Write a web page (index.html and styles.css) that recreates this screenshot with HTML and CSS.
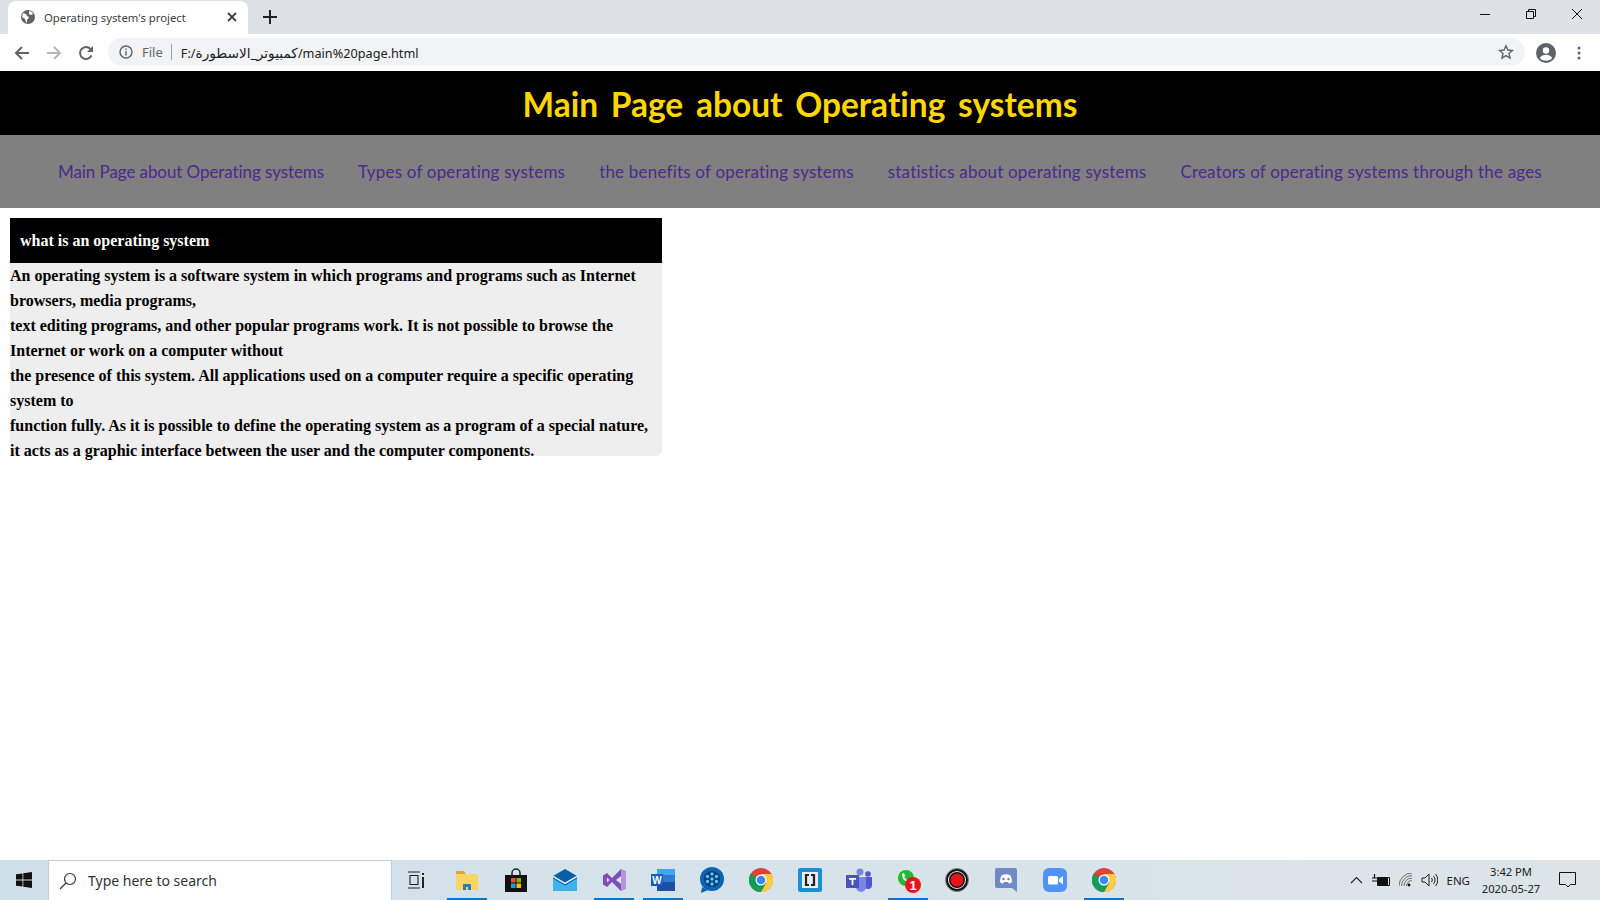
FILE: index.html
```html
<!DOCTYPE html>
<html lang="en">
<head>
    <meta charset="UTF-8">
    <title>Operating system's project</title>
    <link rel="stylesheet" href="styles.css">
</head>
<body>
    <div class="browser">
        <div class="tabstrip">
            <div class="tab">
                <svg class="favicon" width="16" height="16" viewBox="0 0 16 16"><circle cx="8" cy="8" r="7" fill="#5f6368"/><path d="M3 4l3 1 1 2 2 1-1 2-1 1v3l-1-1-1-3-3-2zM9 2l3 1 1 2-2 1-2-1z" fill="#fff"/></svg>
                <span class="tab-title">Operating system's project</span>
                <svg class="tab-close" width="10" height="10" viewBox="0 0 10 10"><path d="M1 1l8 8M9 1l-8 8" stroke="#3c4043" stroke-width="1.8"/></svg>
            </div>
            <svg class="new-tab" width="14" height="14" viewBox="0 0 14 14"><path d="M7 0v14M0 7h14" stroke="#202124" stroke-width="2"/></svg>
            <div class="window-controls">
                <svg width="12" height="12" viewBox="0 0 12 12"><path d="M1 6.500h10" stroke="#111" stroke-width="1"/></svg>
                <svg width="12" height="12" viewBox="0 0 12 12"><path d="M1.500 3.500h7v7h-7zM3.500 3.500v-2h7v7h-2" fill="none" stroke="#111" stroke-width="1"/></svg>
                <svg width="12" height="12" viewBox="0 0 12 12"><path d="M1 1l10 10M11 1l-10 10" stroke="#111" stroke-width="1"/></svg>
            </div>
        </div>
        <div class="toolbar">
            <svg class="nav-icon" width="16" height="16" viewBox="0 0 16 16"><path d="M15 8H2M8 2L2 8l6 6" fill="none" stroke="#5f6368" stroke-width="2"/></svg>
            <svg class="nav-icon" width="16" height="16" viewBox="0 0 16 16"><path d="M1 8h13M8 2l6 6-6 6" fill="none" stroke="#b4b6b9" stroke-width="2"/></svg>
            <svg class="nav-icon" width="16" height="16" viewBox="0 0 16 16"><path d="M13.500 10.500A6 6 0 1 1 12.500 4" fill="none" stroke="#5f6368" stroke-width="2"/><path d="M15 1v6H9z" fill="#5f6368"/></svg>
            <div class="omnibox">
                <svg width="14" height="14" viewBox="0 0 14 14"><circle cx="7" cy="7" r="6" fill="none" stroke="#5f6368" stroke-width="1.400"/><path d="M7 6v4.400M7 3.400v1.500" stroke="#5f6368" stroke-width="1.400"/></svg>
                <span class="scheme">File</span>
                <span class="url">F:/<span class="url-ar">كمبيوتر_الاسطورة</span>/main%20page.html</span>
                <svg class="star" width="16" height="16" viewBox="0 0 16 16"><path d="M8 1.800l1.900 4.200 4.500.5-3.400 3 1 4.500L8 11.600 4 14l1-4.500-3.400-3 4.500-.5z" fill="none" stroke="#5f6368" stroke-width="1.400"/></svg>
            </div>
            <svg class="avatar" width="20" height="20" viewBox="0 0 20 20"><circle cx="10" cy="10" r="10" fill="#5f6368"/><circle cx="10" cy="7.500" r="3.200" fill="#fff"/><path d="M3.800 15c1.500-2.400 3.700-3.200 6.200-3.200s4.700.8 6.200 3.200c-1.500 1.700-3.700 2.700-6.200 2.700s-4.700-1-6.200-2.700z" fill="#fff"/></svg>
            <svg class="menu-dots" width="4" height="14" viewBox="0 0 4 14"><circle cx="2" cy="2" r="1.500" fill="#5f6368"/><circle cx="2" cy="7" r="1.500" fill="#5f6368"/><circle cx="2" cy="12" r="1.500" fill="#5f6368"/></svg>
        </div>
    </div>

    <div class="page">
        <header class="site-header">
            <h1>Main Page about Operating systems</h1>
        </header>
        <nav class="site-nav">
            <a href="#">Main Page about Operating systems</a>
            <a href="#">Types of operating systems</a>
            <a href="#">the benefits of operating systems</a>
            <a href="#">statistics about operating systems</a>
            <a href="#">Creators of operating systems through the ages</a>
        </nav>
        <section class="card">
            <h2>what is an operating system</h2>
            <p>An operating system is a software system in which programs and programs such as Internet browsers, media programs,<br>
            text editing programs, and other popular programs work. It is not possible to browse the Internet or work on a computer without<br>
            the presence of this system. All applications used on a computer require a specific operating system to<br>
            function fully. As it is possible to define the operating system as a program of a special nature, it acts as a graphic interface between the user and the computer components.</p>
        </section>
    </div>

    <div class="taskbar">
        <div class="start">
            <svg width="16" height="16" viewBox="0 0 16 16"><path d="M0 2.300l6.500-.9v6.200H0zM7.300 1.300L16 0v7.600H7.300zM0 8.400h6.500v6.200L0 13.700zM7.300 8.400H16V16l-8.700-1.300z" fill="#111"/></svg>
        </div>
        <div class="search">
            <svg width="18" height="18" viewBox="0 0 18 18"><circle cx="11" cy="7" r="5.500" fill="none" stroke="#333" stroke-width="1.200"/><path d="M7 11l-6 6" stroke="#333" stroke-width="1.200"/></svg>
            <span>Type here to search</span>
        </div>
        <div class="tile task-view">
            <svg width="18" height="18" viewBox="0 0 18 18"><path d="M1 1h12M1 17h12M3 4.500h8v9H3z" fill="none" stroke="#222" stroke-width="1.100"/><path d="M15 2h2v2h-2zM15 6h2v11h-2z" fill="#222"/></svg>
        </div>
        <div class="tile running">
            <svg width="24" height="22" viewBox="0 0 24 22"><path d="M1 2h8l2 3H1z" fill="#d9a63a"/><path d="M1 5h22v16H1z" fill="#fcd462"/><path d="M8 21v-5a1 1 0 0 1 1-1h6a1 1 0 0 1 1 1v5h-3v-3h-2v3z" fill="#2a7bc0"/></svg>
        </div>
        <div class="tile">
            <svg width="22" height="24" viewBox="0 0 22 24"><path d="M7 7V5a4 4 0 0 1 8 0v2" fill="none" stroke="#222" stroke-width="1.500"/><path d="M0 7h22v17H0z" fill="#111"/><path d="M6 10h4.500v4.500H6z" fill="#f25022"/><path d="M11.500 10H16v4.500h-4.500z" fill="#7fba00"/><path d="M6 15.500h4.500V20H6z" fill="#00a4ef"/><path d="M11.500 15.500H16V20h-4.500z" fill="#ffb900"/></svg>
        </div>
        <div class="tile">
            <svg width="24" height="22" viewBox="0 0 24 22"><path d="M0 7l12-7 12 7v15H0z" fill="#0a5ea8"/><path d="M0 9.500l12 7 12-7V22H0z" fill="#3fb2ea"/><path d="M0 7.500l12 7 12-7" fill="none" stroke="#eaf4fa" stroke-width="1.500"/></svg>
        </div>
        <div class="tile running">
            <svg width="24" height="24" viewBox="0 0 24 24"><path d="M1 7.500L5 5l5 5 9-9 5 2.500v17L19 23l-9-9-5 5-4-2.500z" fill="#7d4fb8"/><path d="M19 1l5 2.500v17L19 23z" fill="#b795e0"/><path d="M19 8l-5 4 5 4zM5 9.500v5L7.500 12z" fill="#dbe6ec"/></svg>
        </div>
        <div class="tile running">
            <svg width="24" height="22" viewBox="0 0 24 22"><path d="M6 0h18v22H6z" fill="#1f4fa3"/><path d="M6 0h18v6H6z" fill="#41a5ee"/><path d="M6 6h18v7H6z" fill="#2b7cd3"/><path d="M0 5h12v12H0z" fill="#185abd"/><text class="word-w" x="6" y="14.500">W</text></svg>
        </div>
        <div class="tile">
            <svg width="24" height="26" viewBox="0 0 24 26"><circle cx="12" cy="12" r="12" fill="#0c62b5"/><path d="M2 20l-1 6 7-3z" fill="#0c62b5"/><circle cx="12" cy="12" r="8" fill="#0a3e78"/><g fill="#5cc6f2"><circle cx="12" cy="12" r="1.700"/><circle cx="12" cy="7" r="1.700"/><circle cx="12" cy="17" r="1.700"/><circle cx="7.500" cy="9.500" r="1.700"/><circle cx="16.500" cy="9.500" r="1.700"/><circle cx="7.500" cy="14.500" r="1.700"/><circle cx="16.500" cy="14.500" r="1.700"/></g></svg>
        </div>
        <div class="tile">
            <svg width="24" height="24" viewBox="0 0 24 24"><use href="#chrome"/></svg>
        </div>
        <div class="tile">
            <svg width="24" height="24" viewBox="0 0 24 24"><rect width="24" height="24" rx="2" fill="#1c8fd0"/><rect x="4" y="4" width="16" height="16" fill="#e8eef2"/><path d="M11 7H8v10h3M13 7h3v10h-3" fill="none" stroke="#222" stroke-width="2.200"/></svg>
        </div>
        <div class="tile">
            <svg width="26" height="24" viewBox="0 0 26 24"><circle cx="14" cy="4" r="3.500" fill="#7b83eb"/><circle cx="22" cy="6" r="2.800" fill="#5059c9"/><path d="M18 9h8v8a4 4 0 0 1-8 0z" fill="#5059c9"/><path d="M8 9h12v10a5 5 0 0 1-10 0z" fill="#7b83eb"/><path d="M0 7h13v13H0z" fill="#4b53bc"/><path d="M3 10h7v1.800H7.400V17H5.600v-5.200H3z" fill="#fff"/></svg>
        </div>
        <div class="tile running">
            <svg width="26" height="26" viewBox="0 0 26 26"><circle cx="11" cy="11" r="10.500" fill="#d8e8d8"/><circle cx="11" cy="11" r="8" fill="#25b63c"/><path d="M7 7c0 5 3 8 8 8l1-2-3-1-1 1-3-3 1-1-1-3z" fill="#fff"/><circle cx="18" cy="18" r="8" fill="#e8141c"/><text class="badge-num" x="18" y="22.500">1</text></svg>
        </div>
        <div class="tile">
            <svg width="24" height="24" viewBox="0 0 24 24"><circle cx="12" cy="12" r="11.500" fill="#111" stroke="#888" stroke-width="1"/><circle cx="12" cy="12" r="9" fill="#eee"/><circle cx="12" cy="12" r="8" fill="#111"/><circle cx="12" cy="12" r="6.500" fill="#e8141c"/></svg>
        </div>
        <div class="tile">
            <svg width="22" height="24" viewBox="0 0 22 24"><path d="M2 0h18a2 2 0 0 1 2 2v22l-5-4H2a2 2 0 0 1-2-2V2a2 2 0 0 1 2-2z" fill="#7289c4"/><path d="M5 14c0-3 1-6 2-7 3-1 5-1 8 0 1 1 2 4 2 7-1 1-2 1.500-3 1.500l-1-1.500h-4l-1 1.500c-1 0-2-.5-3-1.500z" fill="#fff"/><circle cx="8.500" cy="11" r="1.300" fill="#7289c4"/><circle cx="13.500" cy="11" r="1.300" fill="#7289c4"/></svg>
        </div>
        <div class="tile">
            <svg width="24" height="24" viewBox="0 0 24 24"><rect width="24" height="24" rx="6" fill="#4f93f5"/><rect x="5" y="8" width="10" height="8.500" rx="1.500" fill="#fff"/><path d="M16 11l4-3v8.500l-4-3z" fill="#fff"/></svg>
        </div>
        <div class="tile running">
            <svg width="24" height="24" viewBox="0 0 24 24">
                <g id="chrome">
                    <circle cx="12" cy="12" r="12" fill="#db4437"/>
                    <path d="M12 12L1.600 6A12 12 0 0 0 12 24l5-8z" fill="#0f9d58"/>
                    <path d="M12 6h10.400A12 12 0 0 1 12 24l5.200-9z" fill="#ffcd40"/>
                    <circle cx="12" cy="12" r="5.500" fill="#fff"/>
                    <circle cx="12" cy="12" r="4.300" fill="#4285f4"/>
                </g>
            </svg>
        </div>
        <div class="tray">
            <svg width="13" height="8" viewBox="0 0 13 8"><path d="M1 7l5.500-5.500L12 7" fill="none" stroke="#222" stroke-width="1.100"/></svg>
            <svg class="tray-battery" width="18" height="12" viewBox="0 0 18 12"><path d="M5.500 3.500h12v8h-12z" fill="none" stroke="#111"/><path d="M6 4h10v7H6z" fill="#111"/><path d="M0 4h5M0 7h5M2.500 0v4" stroke="#111" stroke-width="1.200"/></svg>
            <svg class="tray-wifi" width="14" height="14" viewBox="0 0 14 14"><path d="M0 13a13 13 0 0 1 13-13M2.500 13A10.500 10.500 0 0 1 13 2.500M5 13a8 8 0 0 1 8-8M7.500 13A5.500 5.500 0 0 1 13 7.500" fill="none" stroke="#555" stroke-width=".8"/><circle cx="10" cy="12" r="1.400" fill="#111"/></svg>
            <svg class="tray-volume" width="17" height="14" viewBox="0 0 17 14"><path d="M1 5h3l4-4v12L4 9H1z" fill="none" stroke="#222"/><path d="M10.500 5a3 3 0 0 1 0 4M12.500 3a6 6 0 0 1 0 8M14.500 1a9 9 0 0 1 0 12" fill="none" stroke="#222"/></svg>
            <span class="lang">ENG</span>
            <div class="clock"><span>3:42 PM</span><span>2020-05-27</span></div>
            <svg class="notify" width="17" height="16" viewBox="0 0 17 16"><path d="M.5.500h16v12h-5l-2.500 2.500-2.500-2.500h-6z" fill="none" stroke="#111"/></svg>
        </div>
    </div>
</body>
</html>
```

FILE: styles.css
```css
* {
    box-sizing: border-box;
}

html,
body {
    height: 100%;
    overflow: hidden;
}

body {
    display: flex;
    flex-direction: column;
    margin: 0;
    background: #fff;
}

/* Ventana del navegador */
.tabstrip {
    display: flex;
    align-items: flex-end;
    height: 34px;
    padding-left: 8px;
    background: #dee1e6;
}

.tab {
    display: flex;
    align-items: center;
    width: 240px;
    height: 33px;
    padding: 0 11px 1px 12px;
    background: #fff;
    border-radius: 8px 8px 0 0;
}

.favicon {
    flex: none;
}

.tab-title {
    flex: 1;
    margin-left: 8px;
    color: #3c4043;
    font: 11.300px "Noto Sans", sans-serif;
}

.new-tab {
    align-self: center;
    margin-left: 15px;
}

.window-controls {
    display: flex;
    align-self: flex-start;
    gap: 34px;
    margin: 8px 17px 0 auto;
}

.toolbar {
    display: flex;
    align-items: center;
    height: 37px;
    padding-left: 1px;
    background: #fff;
}

.nav-icon {
    margin-left: 13px;
    margin-right: 3px;
}

.omnibox {
    display: flex;
    flex: 1;
    align-items: center;
    height: 28px;
    margin: 0 0 1px 11px;
    padding: 0 11px;
    background: #f1f3f4;
    border-radius: 14px;
}

.scheme {
    padding-right: 8px;
    margin-left: 9px;
    border-right: 1px solid #9aa0a6;
    color: #5f6368;
    font: 13px/16px "Noto Sans", sans-serif;
}

.url {
    margin-left: 9px;
    color: #202124;
    font: 12.700px "Noto Sans", "DejaVu Sans", sans-serif;
}

.url-ar {
    font-size: 13.700px;
}

.star {
    margin-left: auto;
}

.avatar {
    margin-left: 11px;
}

.menu-dots {
    margin: 0 19px 0 21px;
}

/* Contenido de la pagina */
.page {
    flex: 1;
    min-height: 0;
}

.site-header {
    height: 64px;
    background: #000;
    text-align: center;
}

.site-header h1 {
    margin: 0;
    color: #ffd700;
    font: 700 33.500px/66px Lato, sans-serif;
    font-variant-ligatures: none;
    word-spacing: 4.500px;
}

.site-nav {
    display: flex;
    justify-content: center;
    align-items: center;
    gap: 34px;
    height: 73px;
    background: #808080;
}

.site-nav a {
    color: #4b2a8c;
    font: 17px Lato, sans-serif;
    font-variant-ligatures: none;
    letter-spacing: .2px;
    text-decoration: none;
}

.site-nav a:first-child {
    letter-spacing: -.08px;
}

.card {
    width: 652px;
    margin: 10px 0 0 10px;
}

.card h2 {
    height: 45px;
    margin: 0;
    padding: 0 10px;
    background: #000;
    color: #fff;
    font: 700 16px/45px "Liberation Serif", serif;
}

.card p {
    height: 193px;
    margin: 0;
    padding-right: 2px;
    background: #eee;
    border-radius: 0 0 6px 6px;
    color: #000;
    font: 700 16px/25px "Liberation Serif", serif;
}

/* Barra de tareas */
.taskbar {
    display: flex;
    align-items: center;
    height: 40px;
    background: linear-gradient(90deg, #cfe0ea, #d8e4ea 60%, #dce4e8);
}

.start {
    display: flex;
    justify-content: center;
    width: 48px;
}

.search {
    display: flex;
    align-items: center;
    gap: 11px;
    width: 344px;
    height: 40px;
    padding-left: 10px;
    background: #fff;
    border: 1px solid #c5ccd2;
    border-bottom: 0;
    color: #333;
    font: 14px "Noto Sans", sans-serif;
}

.tile {
    display: flex;
    position: relative;
    justify-content: center;
    align-items: center;
    width: 49px;
    height: 40px;
}

.task-view {
    width: 47px;
    margin-right: 3px;
}

/* Barra azul de las apps abiertas */
.running::after {
    content: "";
    position: absolute;
    left: 5px;
    right: 4px;
    bottom: 0;
    height: 2px;
    background: #0078d7;
}

.word-w {
    fill: #fff;
    font: 700 10px "Liberation Sans", sans-serif;
    text-anchor: middle;
}

.badge-num {
    fill: #fff;
    font: 700 13px "Liberation Sans", sans-serif;
    text-anchor: middle;
}

.tray {
    display: flex;
    align-items: center;
    gap: 8px;
    margin-left: auto;
    padding-right: 24px;
    color: #222;
    font: 12px "Noto Sans", sans-serif;
}

.tray-battery {
    margin-left: 1px;
}

.tray-wifi {
    margin-left: 1px;
}

.lang {
    font-size: 11.500px;
}

.clock {
    display: flex;
    flex-direction: column;
    align-items: center;
    gap: 2px;
    width: 64px;
    margin-left: 1px;
    font-size: 11.200px;
}

.notify {
    margin-left: 8px;
}
```
